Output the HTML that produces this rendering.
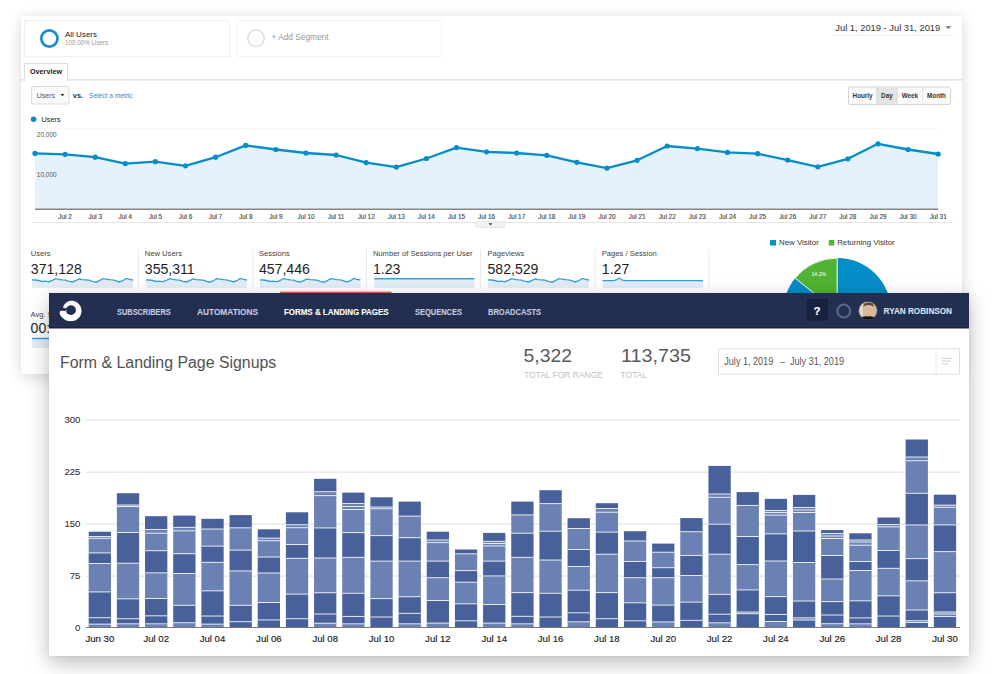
<!DOCTYPE html>
<html><head><meta charset="utf-8">
<style>
html,body{margin:0;padding:0;}
body{width:1000px;height:674px;overflow:hidden;background:#fff;position:relative;font-family:"Liberation Sans",sans-serif;}
.abs{position:absolute;}
#ga{position:absolute;left:21px;top:16px;width:941px;height:358px;background:#fff;box-shadow:0 3px 14px rgba(0,0,0,0.16);}
#ck{position:absolute;left:49px;top:293px;width:920px;height:363px;background:#fff;box-shadow:0 7px 20px rgba(0,0,0,0.26), 0 0 3px rgba(0,0,0,0.08);}
svg{position:absolute;left:0;top:0;overflow:visible;}
.t{position:absolute;white-space:nowrap;line-height:1;}
</style></head><body>

<svg width="1000" height="674" viewBox="0 0 1000 674" style="z-index:0">
</svg>

<div id="ga"></div>
<svg width="1000" height="674" viewBox="0 0 1000 674" style="z-index:1;font-family:'Liberation Sans',sans-serif">
  <!-- segment boxes -->
  <rect x="24.5" y="20.5" width="205" height="36" fill="#fff" stroke="#f1f1f1" stroke-width="1"/>
  <rect x="237.5" y="20.5" width="204" height="36" fill="#fff" stroke="#f3f3f3" stroke-width="1"/>
  <circle cx="49.4" cy="38.5" r="8.1" fill="none" stroke="#168fd1" stroke-width="2.7"/>
  <circle cx="256" cy="38.2" r="8.2" fill="none" stroke="#ddd" stroke-width="1.4"/>
  <text x="65" y="36.6" font-size="8" fill="#222">All Users</text>
  <text x="65" y="45" font-size="6.3" fill="#999">100.00% Users</text>
  <text x="271.5" y="40.2" font-size="8.3" fill="#999">+ Add Segment</text>
  <!-- date -->
  <text x="835.3" y="31" font-size="9.35" fill="#333">Jul 1, 2019 - Jul 31, 2019</text>
  <path d="M945.3,26 L951.6,26 L948.45,29.2 Z" fill="#888"/>
  <rect x="832" y="35" width="121" height="1" fill="#eee"/>
  <!-- tabs -->
  <rect x="24.5" y="63.5" width="43" height="17" fill="#fff" stroke="#ddd" stroke-width="1"/>
  <rect x="21" y="79" width="941" height="1.6" fill="#e2e2e2"/>
  <rect x="25" y="78.5" width="42" height="2.5" fill="#fff"/>
  <text x="30" y="74.2" font-size="7.2" font-weight="bold" fill="#222" textLength="32" lengthAdjust="spacingAndGlyphs">Overview</text>
  <!-- users dropdown -->
  <rect x="31.5" y="86.5" width="37.5" height="17.5" rx="1.5" fill="#fafafa" stroke="#dcdcdc" stroke-width="1"/>
  <text x="36.8" y="97.8" font-size="7" fill="#555">Users</text>
  <path d="M60.5,94 L64.5,94 L62.5,96.2 Z" fill="#333"/>
  <text x="72.8" y="97.6" font-size="7.4" font-weight="bold" fill="#333">vs.</text>
  <text x="89" y="97.8" font-size="6.6" fill="#3f86c8">Select a metric</text>
  <!-- hourly/day/week/month -->
  <rect x="848.5" y="87" width="102" height="17.5" rx="1.5" fill="#fbfbfb" stroke="#d6d6d6" stroke-width="1"/>
  <rect x="876.7" y="87.5" width="20.3" height="16.5" fill="#e4e4e4"/>
  <rect x="876.5" y="87" width="0.8" height="17.5" fill="#d0d0d0"/>
  <rect x="896.8" y="87" width="0.8" height="17.5" fill="#d6d6d6"/>
  <rect x="922.4" y="87" width="0.8" height="17.5" fill="#e0e0e0"/>
  <g font-size="6.3" font-weight="bold" fill="#333" text-anchor="middle">
    <text x="862.6" y="97.8">Hourly</text>
    <text x="886.9" y="97.8">Day</text>
    <text x="909.8" y="97.8">Week</text>
    <text x="936.5" y="97.8">Month</text>
  </g>
  <!-- legend -->
  <circle cx="33.6" cy="119.2" r="2.8" fill="#058dc7"/>
  <text x="41.6" y="122" font-size="7.3" fill="#222">Users</text>
  <!-- chart grid -->
  <rect x="35" y="128.5" width="903" height="0.6" fill="#f0f0f0"/>
  <rect x="35" y="168.5" width="903" height="0.6" fill="#f0f0f0"/>
  <path d="M35.0,209 L35.0,153.4 L65.1,154.3 L95.2,157.2 L125.3,163.6 L155.4,161.7 L185.5,165.8 L215.6,157.2 L245.7,145.4 L275.9,149.5 L306.0,153.0 L336.1,155.0 L366.2,162.6 L396.3,167.1 L426.4,158.5 L456.5,147.6 L486.6,151.8 L516.7,153.0 L546.8,155.3 L576.9,162.3 L607.0,168.1 L637.1,160.3 L667.2,146.0 L697.3,148.6 L727.5,152.4 L757.6,153.7 L787.7,160.1 L817.8,166.8 L847.9,158.8 L878.0,143.8 L908.1,149.5 L938.2,154.0 L938.2,209 Z" fill="#e6f2fb"/>
  <text x="36.8" y="136.8" font-size="6.5" fill="#555">20,000</text>
  <text x="36.8" y="176.8" font-size="6.5" fill="#555">10,000</text>
  <rect x="35" y="208.5" width="903.2" height="1.5" fill="#858585"/>
  <polyline points="35.0,153.4 65.1,154.3 95.2,157.2 125.3,163.6 155.4,161.7 185.5,165.8 215.6,157.2 245.7,145.4 275.9,149.5 306.0,153.0 336.1,155.0 366.2,162.6 396.3,167.1 426.4,158.5 456.5,147.6 486.6,151.8 516.7,153.0 546.8,155.3 576.9,162.3 607.0,168.1 637.1,160.3 667.2,146.0 697.3,148.6 727.5,152.4 757.6,153.7 787.7,160.1 817.8,166.8 847.9,158.8 878.0,143.8 908.1,149.5 938.2,154.0" fill="none" stroke="#058dc7" stroke-width="2.3" stroke-linejoin="round"/>
  <circle cx="35.0" cy="153.4" r="2.6" fill="#058dc7"/><circle cx="65.1" cy="154.3" r="2.6" fill="#058dc7"/><circle cx="95.2" cy="157.2" r="2.6" fill="#058dc7"/><circle cx="125.3" cy="163.6" r="2.6" fill="#058dc7"/><circle cx="155.4" cy="161.7" r="2.6" fill="#058dc7"/><circle cx="185.5" cy="165.8" r="2.6" fill="#058dc7"/><circle cx="215.6" cy="157.2" r="2.6" fill="#058dc7"/><circle cx="245.7" cy="145.4" r="2.6" fill="#058dc7"/><circle cx="275.9" cy="149.5" r="2.6" fill="#058dc7"/><circle cx="306.0" cy="153.0" r="2.6" fill="#058dc7"/><circle cx="336.1" cy="155.0" r="2.6" fill="#058dc7"/><circle cx="366.2" cy="162.6" r="2.6" fill="#058dc7"/><circle cx="396.3" cy="167.1" r="2.6" fill="#058dc7"/><circle cx="426.4" cy="158.5" r="2.6" fill="#058dc7"/><circle cx="456.5" cy="147.6" r="2.6" fill="#058dc7"/><circle cx="486.6" cy="151.8" r="2.6" fill="#058dc7"/><circle cx="516.7" cy="153.0" r="2.6" fill="#058dc7"/><circle cx="546.8" cy="155.3" r="2.6" fill="#058dc7"/><circle cx="576.9" cy="162.3" r="2.6" fill="#058dc7"/><circle cx="607.0" cy="168.1" r="2.6" fill="#058dc7"/><circle cx="637.1" cy="160.3" r="2.6" fill="#058dc7"/><circle cx="667.2" cy="146.0" r="2.6" fill="#058dc7"/><circle cx="697.3" cy="148.6" r="2.6" fill="#058dc7"/><circle cx="727.5" cy="152.4" r="2.6" fill="#058dc7"/><circle cx="757.6" cy="153.7" r="2.6" fill="#058dc7"/><circle cx="787.7" cy="160.1" r="2.6" fill="#058dc7"/><circle cx="817.8" cy="166.8" r="2.6" fill="#058dc7"/><circle cx="847.9" cy="158.8" r="2.6" fill="#058dc7"/><circle cx="878.0" cy="143.8" r="2.6" fill="#058dc7"/><circle cx="908.1" cy="149.5" r="2.6" fill="#058dc7"/><circle cx="938.2" cy="154.0" r="2.6" fill="#058dc7"/>
  <g font-size="6.4" fill="#444" stroke="#444" stroke-width="0.12"><text x="65.1" y="218.5" text-anchor="middle">Jul 2</text><text x="95.2" y="218.5" text-anchor="middle">Jul 3</text><text x="125.3" y="218.5" text-anchor="middle">Jul 4</text><text x="155.4" y="218.5" text-anchor="middle">Jul 5</text><text x="185.5" y="218.5" text-anchor="middle">Jul 6</text><text x="215.6" y="218.5" text-anchor="middle">Jul 7</text><text x="245.7" y="218.5" text-anchor="middle">Jul 8</text><text x="275.9" y="218.5" text-anchor="middle">Jul 9</text><text x="306.0" y="218.5" text-anchor="middle">Jul 10</text><text x="336.1" y="218.5" text-anchor="middle">Jul 11</text><text x="366.2" y="218.5" text-anchor="middle">Jul 12</text><text x="396.3" y="218.5" text-anchor="middle">Jul 13</text><text x="426.4" y="218.5" text-anchor="middle">Jul 14</text><text x="456.5" y="218.5" text-anchor="middle">Jul 15</text><text x="486.6" y="218.5" text-anchor="middle">Jul 16</text><text x="516.7" y="218.5" text-anchor="middle">Jul 17</text><text x="546.8" y="218.5" text-anchor="middle">Jul 18</text><text x="576.9" y="218.5" text-anchor="middle">Jul 19</text><text x="607.0" y="218.5" text-anchor="middle">Jul 20</text><text x="637.1" y="218.5" text-anchor="middle">Jul 21</text><text x="667.2" y="218.5" text-anchor="middle">Jul 22</text><text x="697.3" y="218.5" text-anchor="middle">Jul 23</text><text x="727.5" y="218.5" text-anchor="middle">Jul 24</text><text x="757.6" y="218.5" text-anchor="middle">Jul 25</text><text x="787.7" y="218.5" text-anchor="middle">Jul 26</text><text x="817.8" y="218.5" text-anchor="middle">Jul 27</text><text x="847.9" y="218.5" text-anchor="middle">Jul 28</text><text x="878.0" y="218.5" text-anchor="middle">Jul 29</text><text x="908.1" y="218.5" text-anchor="middle">Jul 30</text><text x="938.2" y="218.5" text-anchor="middle">Jul 31</text></g>
  <text x="32" y="218" font-size="6" fill="#bbb">…</text>
  <rect x="32" y="222" width="921" height="1" fill="#e4e4e4"/>
  <rect x="476" y="221.5" width="29" height="6" rx="1" fill="#f2f2f2" stroke="#ddd" stroke-width="0.6"/>
  <path d="M488.5,223.3 L492.5,223.3 L490.5,225.5 Z" fill="#444"/>
  <!-- metrics -->
  <g font-size="7.6" fill="#444">
    <text x="30.8" y="256.4">Users</text>
    <text x="144.8" y="256.4">New Users</text>
    <text x="258.9" y="256.4">Sessions</text>
    <text x="372.9" y="256.4">Number of Sessions per User</text>
    <text x="487.5" y="256.4">Pageviews</text>
    <text x="601.8" y="256.4">Pages / Session</text>
    <text x="30.6" y="316.5">Avg. Session Duration</text>
  </g>
  <g font-size="14.1" fill="#1e1e1e">
    <text x="30.8" y="274">371,128</text>
    <text x="144.8" y="274">355,311</text>
    <text x="258.9" y="274">457,446</text>
    <text x="372.9" y="274">1.23</text>
    <text x="487.5" y="274">582,529</text>
    <text x="601.8" y="274">1.27</text>
    <text x="30.6" y="333.4">00:01:12</text>
  </g>
  <g fill="#e8e8e8">
    <rect x="138" y="249" width="0.9" height="40"/>
    <rect x="252.5" y="249" width="0.9" height="40"/>
    <rect x="366" y="249" width="0.9" height="40"/>
    <rect x="480.2" y="249" width="0.9" height="40"/>
    <rect x="594.7" y="249" width="0.9" height="40"/>
    <rect x="708.5" y="249" width="0.9" height="40"/>
  </g>
  <path d="M32.0,288 L32.0,279.9 L35.4,280.0 L38.7,280.5 L42.1,281.5 L45.4,281.2 L48.8,281.8 L52.2,280.5 L55.5,278.7 L58.9,279.3 L62.2,279.8 L65.6,280.2 L69.0,281.3 L72.3,282.0 L75.7,280.7 L79.0,279.0 L82.4,279.7 L85.8,279.8 L89.1,280.2 L92.5,281.3 L95.8,282.2 L99.2,281.0 L102.6,278.7 L105.9,279.2 L109.3,279.7 L112.6,279.9 L116.0,280.9 L119.4,282.0 L122.7,280.7 L126.1,278.4 L129.4,279.3 L132.8,280.0 L132.8,288 Z" fill="#e1eef8"/><polyline points="32.0,279.9 35.4,280.0 38.7,280.5 42.1,281.5 45.4,281.2 48.8,281.8 52.2,280.5 55.5,278.7 58.9,279.3 62.2,279.8 65.6,280.2 69.0,281.3 72.3,282.0 75.7,280.7 79.0,279.0 82.4,279.7 85.8,279.8 89.1,280.2 92.5,281.3 95.8,282.2 99.2,281.0 102.6,278.7 105.9,279.2 109.3,279.7 112.6,279.9 116.0,280.9 119.4,282.0 122.7,280.7 126.1,278.4 129.4,279.3 132.8,280.0" fill="none" stroke="#3b9ddb" stroke-width="1.35"/><path d="M146.0,288 L146.0,279.9 L149.4,280.0 L152.7,280.5 L156.1,281.5 L159.4,281.2 L162.8,281.8 L166.2,280.5 L169.5,278.7 L172.9,279.3 L176.2,279.8 L179.6,280.2 L183.0,281.3 L186.3,282.0 L189.7,280.7 L193.0,279.0 L196.4,279.7 L199.8,279.8 L203.1,280.2 L206.5,281.3 L209.8,282.2 L213.2,281.0 L216.6,278.7 L219.9,279.2 L223.3,279.7 L226.6,279.9 L230.0,280.9 L233.4,282.0 L236.7,280.7 L240.1,278.4 L243.4,279.3 L246.8,280.0 L246.8,288 Z" fill="#e1eef8"/><polyline points="146.0,279.9 149.4,280.0 152.7,280.5 156.1,281.5 159.4,281.2 162.8,281.8 166.2,280.5 169.5,278.7 172.9,279.3 176.2,279.8 179.6,280.2 183.0,281.3 186.3,282.0 189.7,280.7 193.0,279.0 196.4,279.7 199.8,279.8 203.1,280.2 206.5,281.3 209.8,282.2 213.2,281.0 216.6,278.7 219.9,279.2 223.3,279.7 226.6,279.9 230.0,280.9 233.4,282.0 236.7,280.7 240.1,278.4 243.4,279.3 246.8,280.0" fill="none" stroke="#3b9ddb" stroke-width="1.35"/><path d="M260.0,288 L260.0,279.9 L263.3,280.0 L266.7,280.5 L270.0,281.5 L273.4,281.2 L276.7,281.8 L280.1,280.5 L283.4,278.7 L286.8,279.3 L290.1,279.8 L293.5,280.2 L296.8,281.3 L300.2,282.0 L303.5,280.7 L306.9,279.0 L310.2,279.7 L313.5,279.8 L316.9,280.2 L320.2,281.3 L323.6,282.2 L326.9,281.0 L330.3,278.7 L333.6,279.2 L337.0,279.7 L340.3,279.9 L343.7,280.9 L347.0,282.0 L350.4,280.7 L353.7,278.4 L357.1,279.3 L360.4,280.0 L360.4,288 Z" fill="#e1eef8"/><polyline points="260.0,279.9 263.3,280.0 266.7,280.5 270.0,281.5 273.4,281.2 276.7,281.8 280.1,280.5 283.4,278.7 286.8,279.3 290.1,279.8 293.5,280.2 296.8,281.3 300.2,282.0 303.5,280.7 306.9,279.0 310.2,279.7 313.5,279.8 316.9,280.2 320.2,281.3 323.6,282.2 326.9,281.0 330.3,278.7 333.6,279.2 337.0,279.7 340.3,279.9 343.7,280.9 347.0,282.0 350.4,280.7 353.7,278.4 357.1,279.3 360.4,280.0" fill="none" stroke="#3b9ddb" stroke-width="1.35"/><path d="M488.0,288 L488.0,279.9 L491.4,280.0 L494.7,280.5 L498.1,281.5 L501.4,281.2 L504.8,281.8 L508.2,280.5 L511.5,278.7 L514.9,279.3 L518.2,279.8 L521.6,280.2 L525.0,281.3 L528.3,282.0 L531.7,280.7 L535.0,279.0 L538.4,279.7 L541.8,279.8 L545.1,280.2 L548.5,281.3 L551.8,282.2 L555.2,281.0 L558.6,278.7 L561.9,279.2 L565.3,279.7 L568.6,279.9 L572.0,280.9 L575.4,282.0 L578.7,280.7 L582.1,278.4 L585.4,279.3 L588.8,280.0 L588.8,288 Z" fill="#e1eef8"/><polyline points="488.0,279.9 491.4,280.0 494.7,280.5 498.1,281.5 501.4,281.2 504.8,281.8 508.2,280.5 511.5,278.7 514.9,279.3 518.2,279.8 521.6,280.2 525.0,281.3 528.3,282.0 531.7,280.7 535.0,279.0 538.4,279.7 541.8,279.8 545.1,280.2 548.5,281.3 551.8,282.2 555.2,281.0 558.6,278.7 561.9,279.2 565.3,279.7 568.6,279.9 572.0,280.9 575.4,282.0 578.7,280.7 582.1,278.4 585.4,279.3 588.8,280.0" fill="none" stroke="#3b9ddb" stroke-width="1.35"/><path d="M374.3,288 L374.3,278.7 L377.6,278.7 L381.0,278.7 L384.3,278.7 L387.6,278.7 L391.0,278.7 L394.3,278.7 L397.7,278.7 L401.0,278.7 L404.3,278.7 L407.7,278.7 L411.0,278.7 L414.3,278.7 L417.7,278.7 L421.0,278.7 L424.4,278.7 L427.7,278.7 L431.0,278.7 L434.4,278.7 L437.7,278.7 L441.0,278.7 L444.4,278.7 L447.7,278.7 L451.0,278.7 L454.4,278.7 L457.7,278.7 L461.1,278.7 L464.4,278.7 L467.7,278.7 L471.1,278.7 L474.4,278.7 L474.4,288 Z" fill="#e1eef8"/><polyline points="374.3,278.7 377.6,278.7 381.0,278.7 384.3,278.7 387.6,278.7 391.0,278.7 394.3,278.7 397.7,278.7 401.0,278.7 404.3,278.7 407.7,278.7 411.0,278.7 414.3,278.7 417.7,278.7 421.0,278.7 424.4,278.7 427.7,278.7 431.0,278.7 434.4,278.7 437.7,278.7 441.0,278.7 444.4,278.7 447.7,278.7 451.0,278.7 454.4,278.7 457.7,278.7 461.1,278.7 464.4,278.7 467.7,278.7 471.1,278.7 474.4,278.7" fill="none" stroke="#3b9ddb" stroke-width="1.35"/><path d="M602.5,288 L602.5,280.6 L605.9,280.6 L609.2,280.6 L612.5,280.6 L615.9,280.2 L619.2,278.0 L622.6,280.2 L626.0,280.6 L629.3,280.6 L632.6,280.6 L636.0,280.6 L639.4,280.6 L642.7,280.6 L646.0,280.6 L649.4,280.6 L652.8,280.6 L656.1,280.6 L659.5,280.6 L662.8,280.6 L666.1,280.6 L669.5,280.6 L672.9,280.6 L676.2,280.6 L679.5,280.6 L682.9,280.6 L686.2,280.6 L689.6,280.6 L693.0,280.6 L696.3,280.6 L699.6,280.6 L703.0,280.6 L703.0,288 Z" fill="#e1eef8"/><polyline points="602.5,280.6 605.9,280.6 609.2,280.6 612.5,280.6 615.9,280.2 619.2,278.0 622.6,280.2 626.0,280.6 629.3,280.6 632.6,280.6 636.0,280.6 639.4,280.6 642.7,280.6 646.0,280.6 649.4,280.6 652.8,280.6 656.1,280.6 659.5,280.6 662.8,280.6 666.1,280.6 669.5,280.6 672.9,280.6 676.2,280.6 679.5,280.6 682.9,280.6 686.2,280.6 689.6,280.6 693.0,280.6 696.3,280.6 699.6,280.6 703.0,280.6" fill="none" stroke="#3b9ddb" stroke-width="1.35"/><path d="M32.0,348 L32.0,338.5 L35.4,338.5 L38.7,338.5 L42.1,338.5 L45.4,338.5 L48.8,338.5 L52.2,338.5 L55.5,338.5 L58.9,338.5 L62.2,338.5 L65.6,338.5 L69.0,338.5 L72.3,338.5 L75.7,338.5 L79.0,338.5 L82.4,338.5 L85.8,338.5 L89.1,338.5 L92.5,338.5 L95.8,338.5 L99.2,338.5 L102.6,338.5 L105.9,338.5 L109.3,338.5 L112.6,338.5 L116.0,338.5 L119.4,338.5 L122.7,338.5 L126.1,338.5 L129.4,338.5 L132.8,338.5 L132.8,348 Z" fill="#e1eef8"/><polyline points="32.0,338.5 35.4,338.5 38.7,338.5 42.1,338.5 45.4,338.5 48.8,338.5 52.2,338.5 55.5,338.5 58.9,338.5 62.2,338.5 65.6,338.5 69.0,338.5 72.3,338.5 75.7,338.5 79.0,338.5 82.4,338.5 85.8,338.5 89.1,338.5 92.5,338.5 95.8,338.5 99.2,338.5 102.6,338.5 105.9,338.5 109.3,338.5 112.6,338.5 116.0,338.5 119.4,338.5 122.7,338.5 126.1,338.5 129.4,338.5 132.8,338.5" fill="none" stroke="#3b9ddb" stroke-width="1.35"/>
  <!-- pie -->
  <rect x="770" y="240" width="6" height="5.5" fill="#058dc7"/>
  <text x="779" y="245.4" font-size="7.9" fill="#333">New Visitor</text>
  <rect x="828.8" y="240" width="5.5" height="5.5" fill="#50b432"/>
  <text x="837.2" y="245.4" font-size="7.8" fill="#333">Returning Visitor</text>
  <circle cx="837.2" cy="312" r="54" fill="#058dc7"/><path d="M837.2,312 L837.2,258 A54,54 0 0 0 795.2,278.1 Z" fill="#50b432" stroke="#fff" stroke-width="1"/>
  <text x="818.8" y="276.4" font-size="5.2" fill="#fff" text-anchor="middle">14.2%</text>
  <rect x="280" y="291.6" width="111.6" height="1.6" fill="#e8645a"/>
</svg>

<div id="ck" style="z-index:2"></div>
<svg width="1000" height="674" viewBox="0 0 1000 674" style="z-index:3;font-family:'Liberation Sans',sans-serif">
  <rect x="49" y="293" width="920" height="35.3" fill="#222f50"/>
  <rect x="49" y="327.2" width="920" height="1.1" fill="#152241"/>
  <!-- logo -->
  <path d="M62.99,307.81 L63.13,307.23 L63.31,306.65 L63.53,306.08 L63.80,305.52 L64.10,304.97 L64.44,304.44 L64.83,303.93 L65.26,303.46 L65.74,303.03 L66.25,302.63 L66.78,302.25 L67.34,301.92 L67.93,301.62 L68.54,301.35 L69.17,301.13 L69.82,300.95 L70.48,300.81 L71.16,300.71 L71.84,300.72 L72.51,300.78 L73.19,300.89 L73.85,301.04 L74.50,301.23 L75.14,301.47 L75.76,301.75 L76.36,302.06 L76.93,302.42 L77.49,302.82 L78.01,303.25 L78.51,303.71 L78.97,304.20 L79.40,304.73 L79.79,305.28 L80.15,305.86 L80.46,306.45 L80.74,307.07 L80.97,307.70 L81.17,308.35 L81.32,309.01 L81.42,309.68 L81.48,310.35 L81.50,311.02 L81.47,311.70 L81.40,312.37 L81.28,313.03 L81.12,313.69 L80.92,314.33 L80.67,314.95 L80.39,315.56 L80.06,316.15 L79.70,316.72 L79.30,317.26 L78.87,317.77 L78.40,318.25 L77.90,318.70 L77.38,319.12 L76.83,319.50 L76.25,319.84 L75.65,320.15 L75.04,320.41 L74.41,320.63 L73.76,320.81 L73.11,320.95 L72.45,321.04 L71.78,321.09 L71.11,321.12 L70.44,321.15 L69.76,321.14 L69.08,321.08 L68.40,320.98 L67.72,320.83 L67.05,320.63 L66.39,320.39 L65.75,320.11 L65.12,319.77 L64.51,319.40 L63.92,318.98 L63.36,318.52 L62.82,318.03 L62.27,317.54 L61.74,317.00 L61.25,316.42 L60.79,315.80 L60.36,315.14 L59.98,314.45 L59.73,313.70 L59.63,312.93 L59.73,312.13 L60.15,311.35 L60.91,310.64 L67.20,310.90 L65.90,309.93 L65.91,310.41 L65.97,310.88 L66.07,311.35 L66.22,311.80 L66.42,312.24 L66.66,312.65 L66.95,313.04 L67.27,313.40 L67.63,313.73 L68.02,314.02 L68.44,314.28 L68.88,314.49 L69.35,314.66 L69.82,314.79 L70.31,314.87 L70.81,314.90 L71.30,314.88 L71.79,314.82 L72.28,314.71 L72.75,314.56 L73.20,314.36 L73.63,314.12 L74.03,313.85 L74.40,313.53 L74.73,313.18 L75.03,312.80 L75.29,312.39 L75.51,311.97 L75.68,311.52 L75.80,311.06 L75.87,310.59 L75.90,310.11 L75.88,309.64 L75.80,309.16 L75.68,308.70 L75.52,308.26 L75.30,307.83 L75.05,307.42 L74.75,307.04 L74.41,306.69 L74.05,306.37 L73.65,306.09 L73.22,305.85 L72.77,305.65 L72.30,305.49 L71.82,305.38 L71.33,305.32 L70.83,305.30 L70.34,305.33 L69.85,305.41 L69.37,305.53 L68.90,305.70 L68.46,305.91 L68.04,306.16 L67.65,306.45 L67.29,306.78 L66.96,307.14 L66.68,307.53 L66.43,307.94 L66.23,308.38 Z" fill="#ffffff"/>
  <text x="117.1" y="315" font-size="8.6" fill="#c8cde0" font-weight="bold" textLength="53.6" lengthAdjust="spacingAndGlyphs" stroke="#c8cde0" stroke-width="0.1">SUBSCRIBERS</text>
  <text x="197" y="315" font-size="8.6" fill="#c8cde0" font-weight="bold" textLength="61.0" lengthAdjust="spacingAndGlyphs" stroke="#c8cde0" stroke-width="0.1">AUTOMATIONS</text>
  <text x="283.9" y="315" font-size="8.6" fill="#ffffff" font-weight="bold" textLength="104.8" lengthAdjust="spacingAndGlyphs" stroke="#ffffff" stroke-width="0.1">FORMS &amp; LANDING PAGES</text>
  <text x="415" y="315" font-size="8.6" fill="#c8cde0" font-weight="bold" textLength="47.0" lengthAdjust="spacingAndGlyphs" stroke="#c8cde0" stroke-width="0.1">SEQUENCES</text>
  <text x="488" y="315" font-size="8.6" fill="#c8cde0" font-weight="bold" textLength="53.0" lengthAdjust="spacingAndGlyphs" stroke="#c8cde0" stroke-width="0.1">BROADCASTS</text>
  <rect x="807" y="299" width="21" height="21.6" fill="#18223e"/>
  <text x="817.2" y="315" font-size="11" font-weight="bold" fill="#fff" text-anchor="middle" stroke="#fff" stroke-width="0.2">?</text>
  <circle cx="843.8" cy="311" r="6.4" fill="none" stroke="#5a6584" stroke-width="2.3"/>
  <defs><clipPath id="av"><circle cx="868" cy="310.7" r="9.4"/></clipPath></defs>
  <g clip-path="url(#av)">
    <rect x="858" y="300" width="20" height="21" fill="#cbbf9f"/>
    <rect x="858" y="300" width="5" height="21" fill="#e2d8c0"/>
    <ellipse cx="868.5" cy="310" rx="5.2" ry="6.6" fill="#dcb89a"/>
    <path d="M863.2,307 Q863.5,302.5 868.5,302.6 Q873.6,302.5 873.8,307 Q871,304.8 868.5,305 Q865.5,304.8 863.2,307 Z" fill="#5a4634"/>
    <path d="M858,322 L858,319 Q862,315.8 868,316.5 Q874,315.8 878,319 L878,322 Z" fill="#111"/>
  </g>
  <circle cx="868" cy="310.7" r="9.4" fill="none" stroke="#2c3858" stroke-width="0.8"/>
  <text x="883.6" y="314.1" font-size="8.8" fill="#dfe3ee" font-weight="bold" textLength="68.4" lengthAdjust="spacingAndGlyphs" stroke="#dfe3ee" stroke-width="0.1">RYAN ROBINSON</text>
  <!-- header -->
  <text x="60" y="367.5" font-size="15.6" fill="#515151" textLength="216.3" lengthAdjust="spacingAndGlyphs" >Form &amp; Landing Page Signups</text>
  <text x="523.6" y="362.2" font-size="18.8" fill="#5a5a5a" textLength="48.4" lengthAdjust="spacingAndGlyphs" >5,322</text>
  <text x="524" y="378" font-size="9.8" fill="#c2c2c2" textLength="79.0" lengthAdjust="spacingAndGlyphs" >TOTAL FOR RANGE</text>
  <text x="621" y="362.2" font-size="18.8" fill="#5a5a5a" textLength="70.0" lengthAdjust="spacingAndGlyphs" >113,735</text>
  <text x="620.6" y="378" font-size="9.8" fill="#c2c2c2" textLength="26.4" lengthAdjust="spacingAndGlyphs" >TOTAL</text>
  <rect x="718.5" y="348.8" width="241" height="25.4" fill="#fff" stroke="#e0e0e0" stroke-width="1"/>
  <rect x="935.6" y="349" width="0.9" height="25" fill="#e6e6e6"/>
  <text x="724.3" y="364.8" font-size="10.2" fill="#555" textLength="48.9" lengthAdjust="spacingAndGlyphs" >July 1, 2019</text>
  <text x="780" y="364.7" font-size="9.1" fill="#555">–</text>
  <text x="790" y="364.8" font-size="10.2" fill="#555" textLength="54.0" lengthAdjust="spacingAndGlyphs" >July 31, 2019</text>
  <g fill="#c6c6c6">
    <rect x="941.8" y="357.9" width="10.2" height="0.8"/>
    <rect x="941.8" y="360.6" width="9.4" height="0.8"/>
    <rect x="941.8" y="363.5" width="6.4" height="0.8"/>
  </g>
  <!-- grid -->
  <g fill="#e3e3e3">
    <rect x="86" y="419.5" width="874" height="1.2"/>
    <rect x="86" y="471.5" width="874" height="1.2"/>
    <rect x="86" y="523.5" width="874" height="1.2"/>
    <rect x="86" y="575.5" width="874" height="1.2"/>
  </g>
  <g font-size="9.6" fill="#333" text-anchor="end" stroke="#333" stroke-width="0.1">
    <text x="80.4" y="423.4">300</text>
    <text x="80.4" y="475.4">225</text>
    <text x="80.4" y="527.4">150</text>
    <text x="80.4" y="579.4">75</text>
    <text x="80.4" y="631.0">0</text>
  </g>
  <rect x="88.70" y="531.70" width="22.3" height="5.30" fill="#48619b"/>
<rect x="88.70" y="536.05" width="22.3" height="1.9" fill="#edf0f6"/>
<rect x="88.70" y="537.00" width="22.3" height="1.80" fill="#6c81b3"/>
<rect x="88.70" y="537.85" width="22.3" height="1.9" fill="#edf0f6"/>
<rect x="88.70" y="538.80" width="22.3" height="14.60" fill="#6c81b3"/>
<rect x="88.70" y="552.45" width="22.3" height="1.9" fill="#edf0f6"/>
<rect x="88.70" y="553.40" width="22.3" height="10.60" fill="#48619b"/>
<rect x="88.70" y="563.05" width="22.3" height="1.9" fill="#edf0f6"/>
<rect x="88.70" y="564.00" width="22.3" height="28.40" fill="#6c81b3"/>
<rect x="88.70" y="591.45" width="22.3" height="1.9" fill="#edf0f6"/>
<rect x="88.70" y="592.40" width="22.3" height="25.80" fill="#48619b"/>
<rect x="88.70" y="617.25" width="22.3" height="1.9" fill="#edf0f6"/>
<rect x="88.70" y="618.20" width="22.3" height="6.40" fill="#48619b"/>
<rect x="88.70" y="623.65" width="22.3" height="1.9" fill="#edf0f6"/>
<rect x="88.70" y="624.60" width="22.3" height="2.90" fill="#6c81b3"/>
<rect x="116.87" y="493.20" width="22.3" height="12.30" fill="#48619b"/>
<rect x="116.87" y="504.55" width="22.3" height="1.9" fill="#edf0f6"/>
<rect x="116.87" y="505.50" width="22.3" height="1.50" fill="#6c81b3"/>
<rect x="116.87" y="506.05" width="22.3" height="1.9" fill="#edf0f6"/>
<rect x="116.87" y="507.00" width="22.3" height="26.00" fill="#6c81b3"/>
<rect x="116.87" y="532.05" width="22.3" height="1.9" fill="#edf0f6"/>
<rect x="116.87" y="533.00" width="22.3" height="30.70" fill="#48619b"/>
<rect x="116.87" y="562.75" width="22.3" height="1.9" fill="#edf0f6"/>
<rect x="116.87" y="563.70" width="22.3" height="35.60" fill="#6c81b3"/>
<rect x="116.87" y="598.35" width="22.3" height="1.9" fill="#edf0f6"/>
<rect x="116.87" y="599.30" width="22.3" height="19.90" fill="#48619b"/>
<rect x="116.87" y="618.25" width="22.3" height="1.9" fill="#edf0f6"/>
<rect x="116.87" y="619.20" width="22.3" height="5.10" fill="#48619b"/>
<rect x="116.87" y="623.35" width="22.3" height="1.9" fill="#edf0f6"/>
<rect x="116.87" y="624.30" width="22.3" height="3.20" fill="#6c81b3"/>
<rect x="145.04" y="516.20" width="22.3" height="13.80" fill="#48619b"/>
<rect x="145.04" y="529.05" width="22.3" height="1.9" fill="#edf0f6"/>
<rect x="145.04" y="530.00" width="22.3" height="3.70" fill="#6c81b3"/>
<rect x="145.04" y="532.75" width="22.3" height="1.9" fill="#edf0f6"/>
<rect x="145.04" y="533.70" width="22.3" height="17.50" fill="#6c81b3"/>
<rect x="145.04" y="550.25" width="22.3" height="1.9" fill="#edf0f6"/>
<rect x="145.04" y="551.20" width="22.3" height="22.10" fill="#48619b"/>
<rect x="145.04" y="572.35" width="22.3" height="1.9" fill="#edf0f6"/>
<rect x="145.04" y="573.30" width="22.3" height="25.70" fill="#6c81b3"/>
<rect x="145.04" y="598.05" width="22.3" height="1.9" fill="#edf0f6"/>
<rect x="145.04" y="599.00" width="22.3" height="17.30" fill="#48619b"/>
<rect x="145.04" y="615.35" width="22.3" height="1.9" fill="#edf0f6"/>
<rect x="145.04" y="616.30" width="22.3" height="8.00" fill="#48619b"/>
<rect x="145.04" y="623.35" width="22.3" height="1.9" fill="#edf0f6"/>
<rect x="145.04" y="624.30" width="22.3" height="3.20" fill="#6c81b3"/>
<rect x="173.21" y="515.60" width="22.3" height="12.20" fill="#48619b"/>
<rect x="173.21" y="526.85" width="22.3" height="1.9" fill="#edf0f6"/>
<rect x="173.21" y="527.80" width="22.3" height="3.50" fill="#6c81b3"/>
<rect x="173.21" y="530.35" width="22.3" height="1.9" fill="#edf0f6"/>
<rect x="173.21" y="531.30" width="22.3" height="22.90" fill="#6c81b3"/>
<rect x="173.21" y="553.25" width="22.3" height="1.9" fill="#edf0f6"/>
<rect x="173.21" y="554.20" width="22.3" height="19.80" fill="#48619b"/>
<rect x="173.21" y="573.05" width="22.3" height="1.9" fill="#edf0f6"/>
<rect x="173.21" y="574.00" width="22.3" height="31.80" fill="#6c81b3"/>
<rect x="173.21" y="604.85" width="22.3" height="1.9" fill="#edf0f6"/>
<rect x="173.21" y="605.80" width="22.3" height="17.40" fill="#48619b"/>
<rect x="173.21" y="622.25" width="22.3" height="1.9" fill="#edf0f6"/>
<rect x="173.21" y="623.20" width="22.3" height="4.30" fill="#6c81b3"/>
<rect x="201.38" y="518.80" width="22.3" height="10.70" fill="#48619b"/>
<rect x="201.38" y="528.55" width="22.3" height="1.9" fill="#edf0f6"/>
<rect x="201.38" y="529.50" width="22.3" height="17.10" fill="#6c81b3"/>
<rect x="201.38" y="545.65" width="22.3" height="1.9" fill="#edf0f6"/>
<rect x="201.38" y="546.60" width="22.3" height="16.20" fill="#48619b"/>
<rect x="201.38" y="561.85" width="22.3" height="1.9" fill="#edf0f6"/>
<rect x="201.38" y="562.80" width="22.3" height="28.50" fill="#6c81b3"/>
<rect x="201.38" y="590.35" width="22.3" height="1.9" fill="#edf0f6"/>
<rect x="201.38" y="591.30" width="22.3" height="25.20" fill="#48619b"/>
<rect x="201.38" y="615.55" width="22.3" height="1.9" fill="#edf0f6"/>
<rect x="201.38" y="616.50" width="22.3" height="8.10" fill="#48619b"/>
<rect x="201.38" y="623.65" width="22.3" height="1.9" fill="#edf0f6"/>
<rect x="201.38" y="624.60" width="22.3" height="2.90" fill="#6c81b3"/>
<rect x="229.55" y="515.10" width="22.3" height="13.20" fill="#48619b"/>
<rect x="229.55" y="527.35" width="22.3" height="1.9" fill="#edf0f6"/>
<rect x="229.55" y="528.30" width="22.3" height="22.30" fill="#6c81b3"/>
<rect x="229.55" y="549.65" width="22.3" height="1.9" fill="#edf0f6"/>
<rect x="229.55" y="550.60" width="22.3" height="20.80" fill="#48619b"/>
<rect x="229.55" y="570.45" width="22.3" height="1.9" fill="#edf0f6"/>
<rect x="229.55" y="571.40" width="22.3" height="34.40" fill="#6c81b3"/>
<rect x="229.55" y="604.85" width="22.3" height="1.9" fill="#edf0f6"/>
<rect x="229.55" y="605.80" width="22.3" height="16.40" fill="#48619b"/>
<rect x="229.55" y="621.25" width="22.3" height="1.9" fill="#edf0f6"/>
<rect x="229.55" y="622.20" width="22.3" height="5.30" fill="#48619b"/>
<rect x="257.72" y="529.30" width="22.3" height="9.30" fill="#48619b"/>
<rect x="257.72" y="537.65" width="22.3" height="1.9" fill="#edf0f6"/>
<rect x="257.72" y="538.60" width="22.3" height="2.60" fill="#6c81b3"/>
<rect x="257.72" y="540.25" width="22.3" height="1.9" fill="#edf0f6"/>
<rect x="257.72" y="541.20" width="22.3" height="16.30" fill="#6c81b3"/>
<rect x="257.72" y="556.55" width="22.3" height="1.9" fill="#edf0f6"/>
<rect x="257.72" y="557.50" width="22.3" height="16.00" fill="#48619b"/>
<rect x="257.72" y="572.55" width="22.3" height="1.9" fill="#edf0f6"/>
<rect x="257.72" y="573.50" width="22.3" height="29.50" fill="#6c81b3"/>
<rect x="257.72" y="602.05" width="22.3" height="1.9" fill="#edf0f6"/>
<rect x="257.72" y="603.00" width="22.3" height="17.40" fill="#48619b"/>
<rect x="257.72" y="619.45" width="22.3" height="1.9" fill="#edf0f6"/>
<rect x="257.72" y="620.40" width="22.3" height="7.10" fill="#48619b"/>
<rect x="285.89" y="512.30" width="22.3" height="12.90" fill="#48619b"/>
<rect x="285.89" y="524.25" width="22.3" height="1.9" fill="#edf0f6"/>
<rect x="285.89" y="525.20" width="22.3" height="3.00" fill="#6c81b3"/>
<rect x="285.89" y="527.25" width="22.3" height="1.9" fill="#edf0f6"/>
<rect x="285.89" y="528.20" width="22.3" height="16.80" fill="#6c81b3"/>
<rect x="285.89" y="544.05" width="22.3" height="1.9" fill="#edf0f6"/>
<rect x="285.89" y="545.00" width="22.3" height="13.80" fill="#48619b"/>
<rect x="285.89" y="557.85" width="22.3" height="1.9" fill="#edf0f6"/>
<rect x="285.89" y="558.80" width="22.3" height="35.80" fill="#6c81b3"/>
<rect x="285.89" y="593.65" width="22.3" height="1.9" fill="#edf0f6"/>
<rect x="285.89" y="594.60" width="22.3" height="24.60" fill="#48619b"/>
<rect x="285.89" y="618.25" width="22.3" height="1.9" fill="#edf0f6"/>
<rect x="285.89" y="619.20" width="22.3" height="8.30" fill="#48619b"/>
<rect x="314.06" y="478.80" width="22.3" height="13.40" fill="#48619b"/>
<rect x="314.06" y="491.25" width="22.3" height="1.9" fill="#edf0f6"/>
<rect x="314.06" y="492.20" width="22.3" height="3.90" fill="#6c81b3"/>
<rect x="314.06" y="495.15" width="22.3" height="1.9" fill="#edf0f6"/>
<rect x="314.06" y="496.10" width="22.3" height="32.30" fill="#6c81b3"/>
<rect x="314.06" y="527.45" width="22.3" height="1.9" fill="#edf0f6"/>
<rect x="314.06" y="528.40" width="22.3" height="30.10" fill="#48619b"/>
<rect x="314.06" y="557.55" width="22.3" height="1.9" fill="#edf0f6"/>
<rect x="314.06" y="558.50" width="22.3" height="34.70" fill="#6c81b3"/>
<rect x="314.06" y="592.25" width="22.3" height="1.9" fill="#edf0f6"/>
<rect x="314.06" y="593.20" width="22.3" height="21.30" fill="#48619b"/>
<rect x="314.06" y="613.55" width="22.3" height="1.9" fill="#edf0f6"/>
<rect x="314.06" y="614.50" width="22.3" height="9.20" fill="#48619b"/>
<rect x="314.06" y="622.75" width="22.3" height="1.9" fill="#edf0f6"/>
<rect x="314.06" y="623.70" width="22.3" height="3.80" fill="#6c81b3"/>
<rect x="342.23" y="492.60" width="22.3" height="11.40" fill="#48619b"/>
<rect x="342.23" y="503.05" width="22.3" height="1.9" fill="#edf0f6"/>
<rect x="342.23" y="504.00" width="22.3" height="3.00" fill="#6c81b3"/>
<rect x="342.23" y="506.05" width="22.3" height="1.9" fill="#edf0f6"/>
<rect x="342.23" y="507.00" width="22.3" height="3.00" fill="#6c81b3"/>
<rect x="342.23" y="509.05" width="22.3" height="1.9" fill="#edf0f6"/>
<rect x="342.23" y="510.00" width="22.3" height="23.10" fill="#6c81b3"/>
<rect x="342.23" y="532.15" width="22.3" height="1.9" fill="#edf0f6"/>
<rect x="342.23" y="533.10" width="22.3" height="24.70" fill="#48619b"/>
<rect x="342.23" y="556.85" width="22.3" height="1.9" fill="#edf0f6"/>
<rect x="342.23" y="557.80" width="22.3" height="36.00" fill="#6c81b3"/>
<rect x="342.23" y="592.85" width="22.3" height="1.9" fill="#edf0f6"/>
<rect x="342.23" y="593.80" width="22.3" height="23.10" fill="#48619b"/>
<rect x="342.23" y="615.95" width="22.3" height="1.9" fill="#edf0f6"/>
<rect x="342.23" y="616.90" width="22.3" height="7.40" fill="#48619b"/>
<rect x="342.23" y="623.35" width="22.3" height="1.9" fill="#edf0f6"/>
<rect x="342.23" y="624.30" width="22.3" height="3.20" fill="#6c81b3"/>
<rect x="370.40" y="497.30" width="22.3" height="10.20" fill="#48619b"/>
<rect x="370.40" y="506.55" width="22.3" height="1.9" fill="#edf0f6"/>
<rect x="370.40" y="507.50" width="22.3" height="1.70" fill="#6c81b3"/>
<rect x="370.40" y="508.25" width="22.3" height="1.9" fill="#edf0f6"/>
<rect x="370.40" y="509.20" width="22.3" height="26.90" fill="#6c81b3"/>
<rect x="370.40" y="535.15" width="22.3" height="1.9" fill="#edf0f6"/>
<rect x="370.40" y="536.10" width="22.3" height="25.50" fill="#48619b"/>
<rect x="370.40" y="560.65" width="22.3" height="1.9" fill="#edf0f6"/>
<rect x="370.40" y="561.60" width="22.3" height="37.50" fill="#6c81b3"/>
<rect x="370.40" y="598.15" width="22.3" height="1.9" fill="#edf0f6"/>
<rect x="370.40" y="599.10" width="22.3" height="18.40" fill="#48619b"/>
<rect x="370.40" y="616.55" width="22.3" height="1.9" fill="#edf0f6"/>
<rect x="370.40" y="617.50" width="22.3" height="10.00" fill="#48619b"/>
<rect x="398.57" y="501.60" width="22.3" height="15.00" fill="#48619b"/>
<rect x="398.57" y="515.65" width="22.3" height="1.9" fill="#edf0f6"/>
<rect x="398.57" y="516.60" width="22.3" height="21.60" fill="#6c81b3"/>
<rect x="398.57" y="537.25" width="22.3" height="1.9" fill="#edf0f6"/>
<rect x="398.57" y="538.20" width="22.3" height="23.40" fill="#48619b"/>
<rect x="398.57" y="560.65" width="22.3" height="1.9" fill="#edf0f6"/>
<rect x="398.57" y="561.60" width="22.3" height="35.60" fill="#6c81b3"/>
<rect x="398.57" y="596.25" width="22.3" height="1.9" fill="#edf0f6"/>
<rect x="398.57" y="597.20" width="22.3" height="16.60" fill="#48619b"/>
<rect x="398.57" y="612.85" width="22.3" height="1.9" fill="#edf0f6"/>
<rect x="398.57" y="613.80" width="22.3" height="10.50" fill="#48619b"/>
<rect x="398.57" y="623.35" width="22.3" height="1.9" fill="#edf0f6"/>
<rect x="398.57" y="624.30" width="22.3" height="3.20" fill="#6c81b3"/>
<rect x="426.74" y="531.70" width="22.3" height="8.80" fill="#48619b"/>
<rect x="426.74" y="539.55" width="22.3" height="1.9" fill="#edf0f6"/>
<rect x="426.74" y="540.50" width="22.3" height="2.60" fill="#6c81b3"/>
<rect x="426.74" y="542.15" width="22.3" height="1.9" fill="#edf0f6"/>
<rect x="426.74" y="543.10" width="22.3" height="18.50" fill="#6c81b3"/>
<rect x="426.74" y="560.65" width="22.3" height="1.9" fill="#edf0f6"/>
<rect x="426.74" y="561.60" width="22.3" height="16.60" fill="#48619b"/>
<rect x="426.74" y="577.25" width="22.3" height="1.9" fill="#edf0f6"/>
<rect x="426.74" y="578.20" width="22.3" height="22.80" fill="#6c81b3"/>
<rect x="426.74" y="600.05" width="22.3" height="1.9" fill="#edf0f6"/>
<rect x="426.74" y="601.00" width="22.3" height="22.60" fill="#48619b"/>
<rect x="426.74" y="622.65" width="22.3" height="1.9" fill="#edf0f6"/>
<rect x="426.74" y="623.60" width="22.3" height="3.90" fill="#6c81b3"/>
<rect x="454.91" y="549.50" width="22.3" height="4.80" fill="#48619b"/>
<rect x="454.91" y="553.35" width="22.3" height="1.9" fill="#edf0f6"/>
<rect x="454.91" y="554.30" width="22.3" height="16.80" fill="#6c81b3"/>
<rect x="454.91" y="570.15" width="22.3" height="1.9" fill="#edf0f6"/>
<rect x="454.91" y="571.10" width="22.3" height="11.60" fill="#48619b"/>
<rect x="454.91" y="581.75" width="22.3" height="1.9" fill="#edf0f6"/>
<rect x="454.91" y="582.70" width="22.3" height="21.60" fill="#6c81b3"/>
<rect x="454.91" y="603.35" width="22.3" height="1.9" fill="#edf0f6"/>
<rect x="454.91" y="604.30" width="22.3" height="17.00" fill="#48619b"/>
<rect x="454.91" y="620.35" width="22.3" height="1.9" fill="#edf0f6"/>
<rect x="454.91" y="621.30" width="22.3" height="6.20" fill="#48619b"/>
<rect x="483.08" y="532.90" width="22.3" height="8.90" fill="#48619b"/>
<rect x="483.08" y="540.85" width="22.3" height="1.9" fill="#edf0f6"/>
<rect x="483.08" y="541.80" width="22.3" height="2.20" fill="#6c81b3"/>
<rect x="483.08" y="543.05" width="22.3" height="1.9" fill="#edf0f6"/>
<rect x="483.08" y="544.00" width="22.3" height="2.40" fill="#6c81b3"/>
<rect x="483.08" y="545.45" width="22.3" height="1.9" fill="#edf0f6"/>
<rect x="483.08" y="546.40" width="22.3" height="15.20" fill="#6c81b3"/>
<rect x="483.08" y="560.65" width="22.3" height="1.9" fill="#edf0f6"/>
<rect x="483.08" y="561.60" width="22.3" height="14.80" fill="#48619b"/>
<rect x="483.08" y="575.45" width="22.3" height="1.9" fill="#edf0f6"/>
<rect x="483.08" y="576.40" width="22.3" height="28.60" fill="#6c81b3"/>
<rect x="483.08" y="604.05" width="22.3" height="1.9" fill="#edf0f6"/>
<rect x="483.08" y="605.00" width="22.3" height="18.60" fill="#48619b"/>
<rect x="483.08" y="622.65" width="22.3" height="1.9" fill="#edf0f6"/>
<rect x="483.08" y="623.60" width="22.3" height="3.90" fill="#6c81b3"/>
<rect x="511.25" y="501.60" width="22.3" height="13.80" fill="#48619b"/>
<rect x="511.25" y="514.45" width="22.3" height="1.9" fill="#edf0f6"/>
<rect x="511.25" y="515.40" width="22.3" height="18.30" fill="#6c81b3"/>
<rect x="511.25" y="532.75" width="22.3" height="1.9" fill="#edf0f6"/>
<rect x="511.25" y="533.70" width="22.3" height="24.10" fill="#48619b"/>
<rect x="511.25" y="556.85" width="22.3" height="1.9" fill="#edf0f6"/>
<rect x="511.25" y="557.80" width="22.3" height="35.30" fill="#6c81b3"/>
<rect x="511.25" y="592.15" width="22.3" height="1.9" fill="#edf0f6"/>
<rect x="511.25" y="593.10" width="22.3" height="23.70" fill="#48619b"/>
<rect x="511.25" y="615.85" width="22.3" height="1.9" fill="#edf0f6"/>
<rect x="511.25" y="616.80" width="22.3" height="7.50" fill="#48619b"/>
<rect x="511.25" y="623.35" width="22.3" height="1.9" fill="#edf0f6"/>
<rect x="511.25" y="624.30" width="22.3" height="3.20" fill="#6c81b3"/>
<rect x="539.42" y="490.20" width="22.3" height="13.90" fill="#48619b"/>
<rect x="539.42" y="503.15" width="22.3" height="1.9" fill="#edf0f6"/>
<rect x="539.42" y="504.10" width="22.3" height="27.60" fill="#6c81b3"/>
<rect x="539.42" y="530.75" width="22.3" height="1.9" fill="#edf0f6"/>
<rect x="539.42" y="531.70" width="22.3" height="28.80" fill="#48619b"/>
<rect x="539.42" y="559.55" width="22.3" height="1.9" fill="#edf0f6"/>
<rect x="539.42" y="560.50" width="22.3" height="33.30" fill="#6c81b3"/>
<rect x="539.42" y="592.85" width="22.3" height="1.9" fill="#edf0f6"/>
<rect x="539.42" y="593.80" width="22.3" height="23.70" fill="#48619b"/>
<rect x="539.42" y="616.55" width="22.3" height="1.9" fill="#edf0f6"/>
<rect x="539.42" y="617.50" width="22.3" height="10.00" fill="#48619b"/>
<rect x="567.59" y="518.20" width="22.3" height="10.80" fill="#48619b"/>
<rect x="567.59" y="528.05" width="22.3" height="1.9" fill="#edf0f6"/>
<rect x="567.59" y="529.00" width="22.3" height="21.00" fill="#6c81b3"/>
<rect x="567.59" y="549.05" width="22.3" height="1.9" fill="#edf0f6"/>
<rect x="567.59" y="550.00" width="22.3" height="17.00" fill="#48619b"/>
<rect x="567.59" y="566.05" width="22.3" height="1.9" fill="#edf0f6"/>
<rect x="567.59" y="567.00" width="22.3" height="23.70" fill="#6c81b3"/>
<rect x="567.59" y="589.75" width="22.3" height="1.9" fill="#edf0f6"/>
<rect x="567.59" y="590.70" width="22.3" height="22.60" fill="#48619b"/>
<rect x="567.59" y="612.35" width="22.3" height="1.9" fill="#edf0f6"/>
<rect x="567.59" y="613.30" width="22.3" height="9.00" fill="#48619b"/>
<rect x="567.59" y="621.35" width="22.3" height="1.9" fill="#edf0f6"/>
<rect x="567.59" y="622.30" width="22.3" height="5.20" fill="#6c81b3"/>
<rect x="595.76" y="503.20" width="22.3" height="5.80" fill="#48619b"/>
<rect x="595.76" y="508.05" width="22.3" height="1.9" fill="#edf0f6"/>
<rect x="595.76" y="509.00" width="22.3" height="3.70" fill="#6c81b3"/>
<rect x="595.76" y="511.75" width="22.3" height="1.9" fill="#edf0f6"/>
<rect x="595.76" y="512.70" width="22.3" height="19.90" fill="#6c81b3"/>
<rect x="595.76" y="531.65" width="22.3" height="1.9" fill="#edf0f6"/>
<rect x="595.76" y="532.60" width="22.3" height="22.10" fill="#48619b"/>
<rect x="595.76" y="553.75" width="22.3" height="1.9" fill="#edf0f6"/>
<rect x="595.76" y="554.70" width="22.3" height="38.40" fill="#6c81b3"/>
<rect x="595.76" y="592.15" width="22.3" height="1.9" fill="#edf0f6"/>
<rect x="595.76" y="593.10" width="22.3" height="26.10" fill="#48619b"/>
<rect x="595.76" y="618.25" width="22.3" height="1.9" fill="#edf0f6"/>
<rect x="595.76" y="619.20" width="22.3" height="8.30" fill="#48619b"/>
<rect x="623.93" y="531.20" width="22.3" height="10.30" fill="#48619b"/>
<rect x="623.93" y="540.55" width="22.3" height="1.9" fill="#edf0f6"/>
<rect x="623.93" y="541.50" width="22.3" height="20.40" fill="#6c81b3"/>
<rect x="623.93" y="560.95" width="22.3" height="1.9" fill="#edf0f6"/>
<rect x="623.93" y="561.90" width="22.3" height="16.30" fill="#48619b"/>
<rect x="623.93" y="577.25" width="22.3" height="1.9" fill="#edf0f6"/>
<rect x="623.93" y="578.20" width="22.3" height="25.10" fill="#6c81b3"/>
<rect x="623.93" y="602.35" width="22.3" height="1.9" fill="#edf0f6"/>
<rect x="623.93" y="603.30" width="22.3" height="18.00" fill="#48619b"/>
<rect x="623.93" y="620.35" width="22.3" height="1.9" fill="#edf0f6"/>
<rect x="623.93" y="621.30" width="22.3" height="6.20" fill="#48619b"/>
<rect x="652.10" y="543.60" width="22.3" height="9.10" fill="#48619b"/>
<rect x="652.10" y="551.75" width="22.3" height="1.9" fill="#edf0f6"/>
<rect x="652.10" y="552.70" width="22.3" height="15.50" fill="#6c81b3"/>
<rect x="652.10" y="567.25" width="22.3" height="1.9" fill="#edf0f6"/>
<rect x="652.10" y="568.20" width="22.3" height="10.00" fill="#48619b"/>
<rect x="652.10" y="577.25" width="22.3" height="1.9" fill="#edf0f6"/>
<rect x="652.10" y="578.20" width="22.3" height="27.40" fill="#6c81b3"/>
<rect x="652.10" y="604.65" width="22.3" height="1.9" fill="#edf0f6"/>
<rect x="652.10" y="605.60" width="22.3" height="16.80" fill="#48619b"/>
<rect x="652.10" y="621.45" width="22.3" height="1.9" fill="#edf0f6"/>
<rect x="652.10" y="622.40" width="22.3" height="5.10" fill="#6c81b3"/>
<rect x="680.27" y="518.10" width="22.3" height="14.10" fill="#48619b"/>
<rect x="680.27" y="531.25" width="22.3" height="1.9" fill="#edf0f6"/>
<rect x="680.27" y="532.20" width="22.3" height="23.70" fill="#6c81b3"/>
<rect x="680.27" y="554.95" width="22.3" height="1.9" fill="#edf0f6"/>
<rect x="680.27" y="555.90" width="22.3" height="20.10" fill="#48619b"/>
<rect x="680.27" y="575.05" width="22.3" height="1.9" fill="#edf0f6"/>
<rect x="680.27" y="576.00" width="22.3" height="26.60" fill="#6c81b3"/>
<rect x="680.27" y="601.65" width="22.3" height="1.9" fill="#edf0f6"/>
<rect x="680.27" y="602.60" width="22.3" height="18.20" fill="#48619b"/>
<rect x="680.27" y="619.85" width="22.3" height="1.9" fill="#edf0f6"/>
<rect x="680.27" y="620.80" width="22.3" height="6.70" fill="#48619b"/>
<rect x="708.44" y="465.90" width="22.3" height="28.60" fill="#48619b"/>
<rect x="708.44" y="493.55" width="22.3" height="1.9" fill="#edf0f6"/>
<rect x="708.44" y="494.50" width="22.3" height="3.30" fill="#6c81b3"/>
<rect x="708.44" y="496.85" width="22.3" height="1.9" fill="#edf0f6"/>
<rect x="708.44" y="497.80" width="22.3" height="26.90" fill="#6c81b3"/>
<rect x="708.44" y="523.75" width="22.3" height="1.9" fill="#edf0f6"/>
<rect x="708.44" y="524.70" width="22.3" height="30.00" fill="#48619b"/>
<rect x="708.44" y="553.75" width="22.3" height="1.9" fill="#edf0f6"/>
<rect x="708.44" y="554.70" width="22.3" height="40.10" fill="#6c81b3"/>
<rect x="708.44" y="593.85" width="22.3" height="1.9" fill="#edf0f6"/>
<rect x="708.44" y="594.80" width="22.3" height="19.90" fill="#48619b"/>
<rect x="708.44" y="613.75" width="22.3" height="1.9" fill="#edf0f6"/>
<rect x="708.44" y="614.70" width="22.3" height="8.60" fill="#48619b"/>
<rect x="708.44" y="622.35" width="22.3" height="1.9" fill="#edf0f6"/>
<rect x="708.44" y="623.30" width="22.3" height="4.20" fill="#6c81b3"/>
<rect x="736.61" y="492.10" width="22.3" height="13.80" fill="#48619b"/>
<rect x="736.61" y="504.95" width="22.3" height="1.9" fill="#edf0f6"/>
<rect x="736.61" y="505.90" width="22.3" height="31.10" fill="#6c81b3"/>
<rect x="736.61" y="536.05" width="22.3" height="1.9" fill="#edf0f6"/>
<rect x="736.61" y="537.00" width="22.3" height="28.10" fill="#48619b"/>
<rect x="736.61" y="564.15" width="22.3" height="1.9" fill="#edf0f6"/>
<rect x="736.61" y="565.10" width="22.3" height="25.30" fill="#6c81b3"/>
<rect x="736.61" y="589.45" width="22.3" height="1.9" fill="#edf0f6"/>
<rect x="736.61" y="590.40" width="22.3" height="22.10" fill="#48619b"/>
<rect x="736.61" y="611.55" width="22.3" height="1.9" fill="#edf0f6"/>
<rect x="736.61" y="612.50" width="22.3" height="1.70" fill="#6c81b3"/>
<rect x="736.61" y="613.25" width="22.3" height="1.9" fill="#edf0f6"/>
<rect x="736.61" y="614.20" width="22.3" height="13.30" fill="#48619b"/>
<rect x="764.78" y="498.90" width="22.3" height="12.10" fill="#48619b"/>
<rect x="764.78" y="510.05" width="22.3" height="1.9" fill="#edf0f6"/>
<rect x="764.78" y="511.00" width="22.3" height="2.00" fill="#6c81b3"/>
<rect x="764.78" y="512.05" width="22.3" height="1.9" fill="#edf0f6"/>
<rect x="764.78" y="513.00" width="22.3" height="2.60" fill="#6c81b3"/>
<rect x="764.78" y="514.65" width="22.3" height="1.9" fill="#edf0f6"/>
<rect x="764.78" y="515.60" width="22.3" height="18.70" fill="#6c81b3"/>
<rect x="764.78" y="533.35" width="22.3" height="1.9" fill="#edf0f6"/>
<rect x="764.78" y="534.30" width="22.3" height="27.20" fill="#48619b"/>
<rect x="764.78" y="560.55" width="22.3" height="1.9" fill="#edf0f6"/>
<rect x="764.78" y="561.50" width="22.3" height="35.60" fill="#6c81b3"/>
<rect x="764.78" y="596.15" width="22.3" height="1.9" fill="#edf0f6"/>
<rect x="764.78" y="597.10" width="22.3" height="17.80" fill="#48619b"/>
<rect x="764.78" y="613.95" width="22.3" height="1.9" fill="#edf0f6"/>
<rect x="764.78" y="614.90" width="22.3" height="7.10" fill="#48619b"/>
<rect x="764.78" y="621.05" width="22.3" height="1.9" fill="#edf0f6"/>
<rect x="764.78" y="622.00" width="22.3" height="5.50" fill="#6c81b3"/>
<rect x="792.95" y="494.90" width="22.3" height="13.10" fill="#48619b"/>
<rect x="792.95" y="507.05" width="22.3" height="1.9" fill="#edf0f6"/>
<rect x="792.95" y="508.00" width="22.3" height="2.50" fill="#6c81b3"/>
<rect x="792.95" y="509.55" width="22.3" height="1.9" fill="#edf0f6"/>
<rect x="792.95" y="510.50" width="22.3" height="2.50" fill="#6c81b3"/>
<rect x="792.95" y="512.05" width="22.3" height="1.9" fill="#edf0f6"/>
<rect x="792.95" y="513.00" width="22.3" height="18.50" fill="#6c81b3"/>
<rect x="792.95" y="530.55" width="22.3" height="1.9" fill="#edf0f6"/>
<rect x="792.95" y="531.50" width="22.3" height="31.50" fill="#48619b"/>
<rect x="792.95" y="562.05" width="22.3" height="1.9" fill="#edf0f6"/>
<rect x="792.95" y="563.00" width="22.3" height="38.50" fill="#6c81b3"/>
<rect x="792.95" y="600.55" width="22.3" height="1.9" fill="#edf0f6"/>
<rect x="792.95" y="601.50" width="22.3" height="16.80" fill="#48619b"/>
<rect x="792.95" y="617.35" width="22.3" height="1.9" fill="#edf0f6"/>
<rect x="792.95" y="618.30" width="22.3" height="2.20" fill="#6c81b3"/>
<rect x="792.95" y="619.55" width="22.3" height="1.9" fill="#edf0f6"/>
<rect x="792.95" y="620.50" width="22.3" height="7.00" fill="#48619b"/>
<rect x="821.12" y="530.10" width="22.3" height="3.90" fill="#48619b"/>
<rect x="821.12" y="533.05" width="22.3" height="1.9" fill="#edf0f6"/>
<rect x="821.12" y="534.00" width="22.3" height="2.50" fill="#6c81b3"/>
<rect x="821.12" y="535.55" width="22.3" height="1.9" fill="#edf0f6"/>
<rect x="821.12" y="536.50" width="22.3" height="2.50" fill="#6c81b3"/>
<rect x="821.12" y="538.05" width="22.3" height="1.9" fill="#edf0f6"/>
<rect x="821.12" y="539.00" width="22.3" height="17.00" fill="#6c81b3"/>
<rect x="821.12" y="555.05" width="22.3" height="1.9" fill="#edf0f6"/>
<rect x="821.12" y="556.00" width="22.3" height="23.50" fill="#48619b"/>
<rect x="821.12" y="578.55" width="22.3" height="1.9" fill="#edf0f6"/>
<rect x="821.12" y="579.50" width="22.3" height="22.60" fill="#6c81b3"/>
<rect x="821.12" y="601.15" width="22.3" height="1.9" fill="#edf0f6"/>
<rect x="821.12" y="602.10" width="22.3" height="13.40" fill="#48619b"/>
<rect x="821.12" y="614.55" width="22.3" height="1.9" fill="#edf0f6"/>
<rect x="821.12" y="615.50" width="22.3" height="8.70" fill="#48619b"/>
<rect x="821.12" y="623.25" width="22.3" height="1.9" fill="#edf0f6"/>
<rect x="821.12" y="624.20" width="22.3" height="3.30" fill="#6c81b3"/>
<rect x="849.29" y="533.30" width="22.3" height="7.20" fill="#48619b"/>
<rect x="849.29" y="539.55" width="22.3" height="1.9" fill="#edf0f6"/>
<rect x="849.29" y="540.50" width="22.3" height="2.00" fill="#6c81b3"/>
<rect x="849.29" y="541.55" width="22.3" height="1.9" fill="#edf0f6"/>
<rect x="849.29" y="542.50" width="22.3" height="3.20" fill="#6c81b3"/>
<rect x="849.29" y="544.75" width="22.3" height="1.9" fill="#edf0f6"/>
<rect x="849.29" y="545.70" width="22.3" height="16.30" fill="#6c81b3"/>
<rect x="849.29" y="561.05" width="22.3" height="1.9" fill="#edf0f6"/>
<rect x="849.29" y="562.00" width="22.3" height="9.00" fill="#48619b"/>
<rect x="849.29" y="570.05" width="22.3" height="1.9" fill="#edf0f6"/>
<rect x="849.29" y="571.00" width="22.3" height="30.30" fill="#6c81b3"/>
<rect x="849.29" y="600.35" width="22.3" height="1.9" fill="#edf0f6"/>
<rect x="849.29" y="601.30" width="22.3" height="17.10" fill="#48619b"/>
<rect x="849.29" y="617.45" width="22.3" height="1.9" fill="#edf0f6"/>
<rect x="849.29" y="618.40" width="22.3" height="5.90" fill="#48619b"/>
<rect x="849.29" y="623.35" width="22.3" height="1.9" fill="#edf0f6"/>
<rect x="849.29" y="624.30" width="22.3" height="3.20" fill="#6c81b3"/>
<rect x="877.46" y="517.50" width="22.3" height="7.50" fill="#48619b"/>
<rect x="877.46" y="524.05" width="22.3" height="1.9" fill="#edf0f6"/>
<rect x="877.46" y="525.00" width="22.3" height="2.30" fill="#6c81b3"/>
<rect x="877.46" y="526.35" width="22.3" height="1.9" fill="#edf0f6"/>
<rect x="877.46" y="527.30" width="22.3" height="23.70" fill="#6c81b3"/>
<rect x="877.46" y="550.05" width="22.3" height="1.9" fill="#edf0f6"/>
<rect x="877.46" y="551.00" width="22.3" height="17.80" fill="#48619b"/>
<rect x="877.46" y="567.85" width="22.3" height="1.9" fill="#edf0f6"/>
<rect x="877.46" y="568.80" width="22.3" height="27.50" fill="#6c81b3"/>
<rect x="877.46" y="595.35" width="22.3" height="1.9" fill="#edf0f6"/>
<rect x="877.46" y="596.30" width="22.3" height="20.20" fill="#48619b"/>
<rect x="877.46" y="615.55" width="22.3" height="1.9" fill="#edf0f6"/>
<rect x="877.46" y="616.50" width="22.3" height="11.00" fill="#48619b"/>
<rect x="905.63" y="439.50" width="22.3" height="18.00" fill="#48619b"/>
<rect x="905.63" y="456.55" width="22.3" height="1.9" fill="#edf0f6"/>
<rect x="905.63" y="457.50" width="22.3" height="3.70" fill="#6c81b3"/>
<rect x="905.63" y="460.25" width="22.3" height="1.9" fill="#edf0f6"/>
<rect x="905.63" y="461.20" width="22.3" height="32.60" fill="#6c81b3"/>
<rect x="905.63" y="492.85" width="22.3" height="1.9" fill="#edf0f6"/>
<rect x="905.63" y="493.80" width="22.3" height="31.60" fill="#48619b"/>
<rect x="905.63" y="524.45" width="22.3" height="1.9" fill="#edf0f6"/>
<rect x="905.63" y="525.40" width="22.3" height="33.70" fill="#6c81b3"/>
<rect x="905.63" y="558.15" width="22.3" height="1.9" fill="#edf0f6"/>
<rect x="905.63" y="559.10" width="22.3" height="22.20" fill="#48619b"/>
<rect x="905.63" y="580.35" width="22.3" height="1.9" fill="#edf0f6"/>
<rect x="905.63" y="581.30" width="22.3" height="29.20" fill="#6c81b3"/>
<rect x="905.63" y="609.55" width="22.3" height="1.9" fill="#edf0f6"/>
<rect x="905.63" y="610.50" width="22.3" height="10.70" fill="#48619b"/>
<rect x="905.63" y="620.25" width="22.3" height="1.9" fill="#edf0f6"/>
<rect x="905.63" y="621.20" width="22.3" height="1.80" fill="#6c81b3"/>
<rect x="905.63" y="622.05" width="22.3" height="1.9" fill="#edf0f6"/>
<rect x="905.63" y="623.00" width="22.3" height="4.50" fill="#48619b"/>
<rect x="933.80" y="494.70" width="22.3" height="10.90" fill="#48619b"/>
<rect x="933.80" y="504.65" width="22.3" height="1.9" fill="#edf0f6"/>
<rect x="933.80" y="505.60" width="22.3" height="2.10" fill="#6c81b3"/>
<rect x="933.80" y="506.75" width="22.3" height="1.9" fill="#edf0f6"/>
<rect x="933.80" y="507.70" width="22.3" height="17.70" fill="#6c81b3"/>
<rect x="933.80" y="524.45" width="22.3" height="1.9" fill="#edf0f6"/>
<rect x="933.80" y="525.40" width="22.3" height="26.70" fill="#48619b"/>
<rect x="933.80" y="551.15" width="22.3" height="1.9" fill="#edf0f6"/>
<rect x="933.80" y="552.10" width="22.3" height="41.10" fill="#6c81b3"/>
<rect x="933.80" y="592.25" width="22.3" height="1.9" fill="#edf0f6"/>
<rect x="933.80" y="593.20" width="22.3" height="19.30" fill="#48619b"/>
<rect x="933.80" y="611.55" width="22.3" height="1.9" fill="#edf0f6"/>
<rect x="933.80" y="612.50" width="22.3" height="2.00" fill="#6c81b3"/>
<rect x="933.80" y="613.55" width="22.3" height="1.9" fill="#edf0f6"/>
<rect x="933.80" y="614.50" width="22.3" height="2.50" fill="#6c81b3"/>
<rect x="933.80" y="616.05" width="22.3" height="1.9" fill="#edf0f6"/>
<rect x="933.80" y="617.00" width="22.3" height="10.50" fill="#48619b"/>
  <rect x="86" y="627" width="874" height="1" fill="#777"/>
  <g font-size="9.6" fill="#262626" stroke="#262626" stroke-width="0.18"><text x="99.9" y="642.4" text-anchor="middle">Jun 30</text><text x="156.2" y="642.4" text-anchor="middle">Jul 02</text><text x="212.5" y="642.4" text-anchor="middle">Jul 04</text><text x="268.9" y="642.4" text-anchor="middle">Jul 06</text><text x="325.2" y="642.4" text-anchor="middle">Jul 08</text><text x="381.6" y="642.4" text-anchor="middle">Jul 10</text><text x="437.9" y="642.4" text-anchor="middle">Jul 12</text><text x="494.2" y="642.4" text-anchor="middle">Jul 14</text><text x="550.6" y="642.4" text-anchor="middle">Jul 16</text><text x="606.9" y="642.4" text-anchor="middle">Jul 18</text><text x="663.3" y="642.4" text-anchor="middle">Jul 20</text><text x="719.6" y="642.4" text-anchor="middle">Jul 22</text><text x="775.9" y="642.4" text-anchor="middle">Jul 24</text><text x="832.3" y="642.4" text-anchor="middle">Jul 26</text><text x="888.6" y="642.4" text-anchor="middle">Jul 28</text><text x="945.0" y="642.4" text-anchor="middle">Jul 30</text></g>
</svg>
</body></html>
